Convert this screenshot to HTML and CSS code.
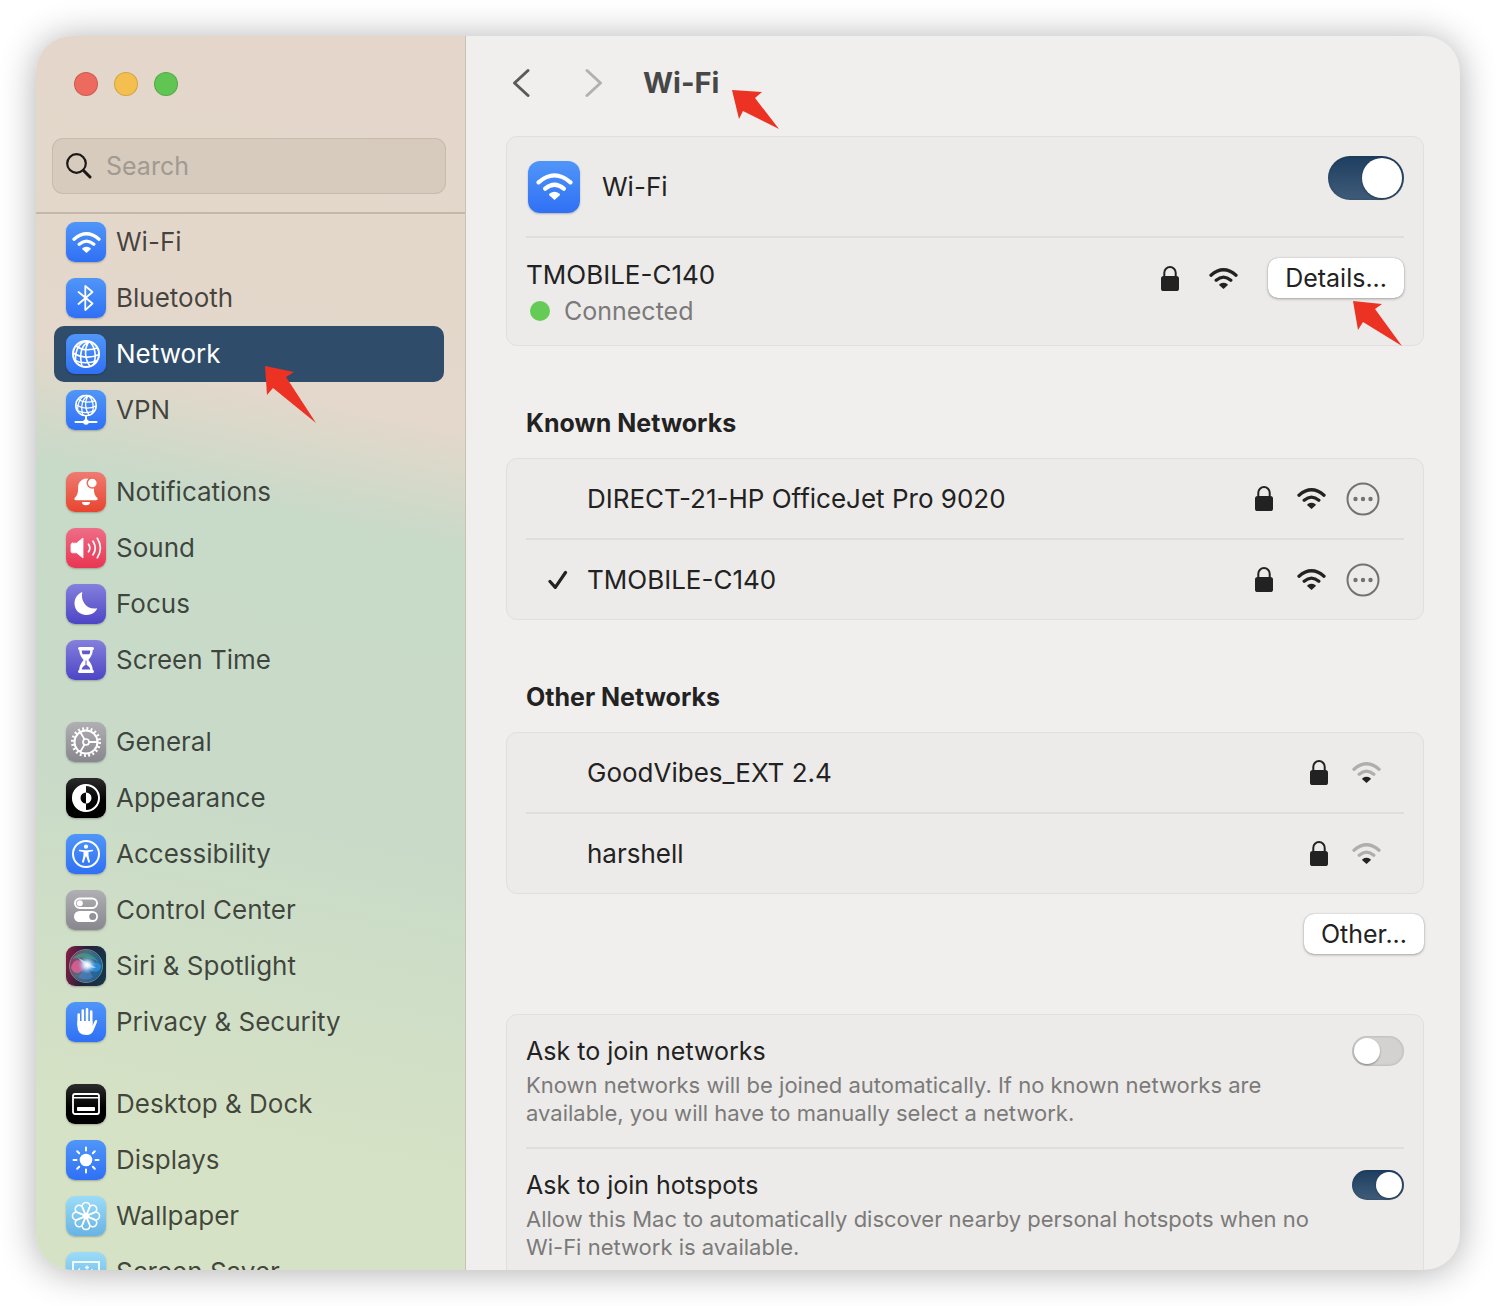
FILE: index.html
```
<!DOCTYPE html>
<html lang="en">

<head>
    <meta charset="UTF-8">
    <meta name="viewport" content="width=device-width, initial-scale=1.0">
    <title>System Settings - Wi-Fi</title>
    <link rel="stylesheet" href="styles.css">
</head>

<body>
    <!-- shared icons -->
    <svg class="defs" aria-hidden="true">
        <symbol id="wifi" viewBox="0 0 29 21">
            <path d="M2 7.2Q14.5-3.7 27 7.2M7.2 12.2Q14.5 6 21.8 12.2" fill="none" stroke="currentColor" stroke-width="3.3" stroke-linecap="round" />
            <path d="M14.5 21L10.6 17.6Q9.6 16.6 10.7 15.9Q14.5 13.5 18.3 15.9Q19.4 16.6 18.4 17.6Z" fill="currentColor" />
        </symbol>
        <symbol id="wifi-weak" viewBox="0 0 29 21">
            <path d="M2 7.2Q14.5-3.7 27 7.2M7.2 12.2Q14.5 6 21.8 12.2" fill="none" stroke="#afaead" stroke-width="3.3" stroke-linecap="round" />
            <path d="M14.5 21L10.6 17.6Q9.6 16.6 10.7 15.9Q14.5 13.5 18.3 15.9Q19.4 16.6 18.4 17.6Z" fill="currentColor" />
        </symbol>
        <symbol id="lock" viewBox="0 0 18 25">
            <path d="M3.3 11V6.8a5.7 5.7 0 0 1 11.4 0V11" fill="none" stroke="currentColor" stroke-width="2" />
            <rect y="10" width="18" height="15" rx="2.6" fill="currentColor" />
        </symbol>
        <symbol id="more" viewBox="0 0 34 34">
            <circle cx="17" cy="17" r="15.5" fill="none" stroke="currentColor" stroke-width="2" />
            <circle cx="9.5" cy="17" r="2.2" fill="currentColor" />
            <circle cx="17" cy="17" r="2.2" fill="currentColor" />
            <circle cx="24.5" cy="17" r="2.2" fill="currentColor" />
        </symbol>
        <symbol id="globe" viewBox="0 0 28 28">
            <g fill="none" stroke="currentColor" stroke-width="1.6">
                <circle cx="14" cy="14" r="13" stroke-width="2" />
                <path d="M17 1.4C9 5 7 15 10 26.4M17 1.4C12 8 12.5 19 18 26.2M17 1.4C23 6 25 16 21.5 24.5M15.5 1.2C8 1.5 3 9 3.5 21" />
                <path d="M4 6C10 10.5 18 10.5 25.5 8M1.2 13C9 18 19 18.5 27 14.5M3 20.5C9 23.5 18 23.5 25 20.5" />
            </g>
        </symbol>
    </svg>

    <div class="window">
        <aside class="sidebar">
            <div class="lights">
                <button class="light red" aria-label="Close"></button>
                <button class="light yellow" aria-label="Minimize"></button>
                <button class="light green" aria-label="Zoom"></button>
            </div>

            <label class="search">
                <svg width="26" height="26" viewBox="0 0 26 26" fill="none" stroke="#1c1815" stroke-linecap="round">
                    <circle cx="10.5" cy="10.5" r="9.3" stroke-width="2.2" />
                    <path d="M17.5 17.5L24 24" stroke-width="3" />
                </svg>
                <input type="search" placeholder="Search" aria-label="Search">
            </label>

            <nav class="menu">
                <div class="group">
                    <a href="#">
                        <span class="icon blue"><svg width="29" height="21"><use href="#wifi" /></svg></span>
                        Wi-Fi
                    </a>
                    <a href="#">
                        <span class="icon blue">
                            <svg viewBox="0 0 40 40" fill="none" stroke="#fff" stroke-width="1.8" stroke-linejoin="round" stroke-linecap="round"><path d="M12.5 14L26.5 25.5L19.3 32V8L26.5 14L12.5 26" /></svg>
                        </span>
                        Bluetooth
                    </a>
                    <a href="#" class="active">
                        <span class="icon blue"><svg width="28" height="28"><use href="#globe" /></svg></span>
                        Network
                        <svg class="arrow arrow-network" viewBox="0 0 51 57"><path d="M0 0L29 6L21 11L51 57L8 22L2 29Z" /></svg>
                    </a>
                    <a href="#">
                        <span class="icon blue">
                            <svg viewBox="0 0 40 40"><use href="#globe" x="9" y="4.5" width="22" height="22" /><path d="M20 26v6M9.5 32h21" stroke="#fff" stroke-width="2" stroke-linecap="round" /><circle cx="20" cy="32" r="2.8" fill="#fff" /></svg>
                        </span>
                        VPN
                    </a>
                </div>

                <div class="group">
                    <a href="#">
                        <span class="icon red-icon">
                            <svg viewBox="0 0 40 40" fill="#fff"><path d="M20 6.500C24 6.500 27.500 9.500 27.800 14C28 20 28 22.500 31 25.500C32.300 27 31.500 28.300 30 28.300H10C8.500 28.300 7.700 27 9 25.500C12 22.500 12 20 12.200 14C12.500 11 15 8 17.500 7.300Q18.500 6.500 20 6.500Z" /><circle cx="26.300" cy="11" r="5.800" fill="#ec6a5f" /><circle cx="26.300" cy="11" r="4.300" /><path d="M16 30h8a4 3.200 0 0 1-8 0Z" /></svg>
                        </span>
                        Notifications
                    </a>
                    <a href="#">
                        <span class="icon pink">
                            <svg viewBox="0 0 40 40" fill="none" stroke="#fff" stroke-linecap="round" stroke-width="1.7"><path d="M6.500 15.200H10.500L17 10V30L10.500 24.800H6.500Q5 24.800 5 23.300V16.700Q5 15.200 6.500 15.200Z" fill="#fff" stroke-width=".8" stroke-linejoin="round" /><path d="M22.500 16.200Q25.200 20 22.500 23.800M27 13.200Q31.500 20 27 26.800M31.300 10.300Q37.500 20 31.300 29.700" /></svg>
                        </span>
                        Sound
                    </a>
                    <a href="#">
                        <span class="icon purple">
                            <svg viewBox="0 0 40 40"><path d="M16.200 8.400C14.500 16.500 20 26 31.300 24.300C29 29 25.500 31 20.500 31C13.500 31 8.500 26 8.500 19.500C8.500 14.500 11.200 10.500 15.500 8.300Q16.400 7.800 16.200 8.400Z" fill="#fff" /></svg>
                        </span>
                        Focus
                    </a>
                    <a href="#">
                        <span class="icon purple">
                            <svg viewBox="0 0 40 40"><path d="M13.500 7H26.500Q28 7 28 8.500Q28 9.800 26.800 10C26.500 15 24 18 22.300 20C24 22 26.500 25 26.800 30Q28 30.200 28 31.500Q28 33 26.500 33H13.500Q12 33 12 31.500Q12 30.200 13.200 30C13.500 25 16 22 17.700 20C16 18 13.500 15 13.200 10Q12 9.800 12 8.500Q12 7 13.500 7Z" fill="#fff" /><path d="M15.700 10.500H24.300Q24.200 12.700 23.300 14.200H16.700Q15.800 12.700 15.700 10.500ZM19.500 20.500h1V25C22.500 26 24 27.500 24.300 29.500H15.700C16 27.500 17.500 26 19.500 25Z" fill="#5f57cc" /></svg>
                        </span>
                        Screen Time
                    </a>
                </div>

                <div class="group">
                    <a href="#">
                        <span class="icon gray">
                            <svg viewBox="0 0 40 40" fill="none" stroke="#fff"><circle cx="20" cy="20" r="11.5" stroke-width="2" /><circle cx="20" cy="20" r="13.6" stroke-width="2.8" stroke-dasharray="1.9 2.373" /><circle cx="20" cy="20" r="3" stroke-width="1.7" /><path d="M23 20H31.500M18.500 17.400L14.200 10M18.500 22.600L14.200 30" stroke-width="1.8" /></svg>
                        </span>
                        General
                    </a>
                    <a href="#">
                        <span class="icon black">
                            <svg viewBox="0 0 40 40"><circle cx="20" cy="20" r="13" fill="none" stroke="#fff" stroke-width="2" /><path d="M20 6.500V14.500A5.500 5.500 0 0 0 20 25.500V33.500A13.500 13.500 0 0 1 20 6.500ZM20 14.500A5.500 5.500 0 0 1 20 25.500Z" fill="#fff" /></svg>
                        </span>
                        Appearance
                    </a>
                    <a href="#">
                        <span class="icon blue">
                            <svg viewBox="0 0 40 40" fill="#fff"><circle cx="20" cy="20" r="13" fill="none" stroke="#fff" stroke-width="2" /><circle cx="20" cy="12.7" r="2.1" /><path d="M13.300 15.700L18.500 16.300H21.500L26.700 15.700Q27.700 16.500 26.700 17.200L22.500 18V21.500L24 28Q23 29.300 22.200 28.200L20.300 22.500H19.700L17.800 28.200Q17 29.300 16 28L17.500 21.500V18L13.300 17.200Q12.300 16.500 13.300 15.700Z" /></svg>
                        </span>
                        Accessibility
                    </a>
                    <a href="#">
                        <span class="icon gray">
                            <svg viewBox="0 0 40 40"><rect x="9" y="8.5" width="22" height="9.5" rx="4.75" fill="none" stroke="#fff" stroke-width="2" /><circle cx="13.8" cy="13.2" r="3" fill="#fff" /><rect x="8" y="21" width="24" height="11" rx="5.5" fill="#fff" /><circle cx="26.7" cy="26.5" r="3.5" fill="#929197" /></svg>
                        </span>
                        Control Center
                    </a>
                    <a href="#">
                        <span class="icon siri">
                            <svg viewBox="0 0 40 40">
                                <defs>
                                    <radialGradient id="glow"><stop offset="0" stop-color="#fff" /><stop offset=".35" stop-color="#dff0ff" stop-opacity=".85" /><stop offset="1" stop-color="#7fb6ff" stop-opacity="0" /></radialGradient>
                                    <linearGradient id="orb" x2="1" y2=".4"><stop offset="0" stop-color="#c02c63" /><stop offset=".45" stop-color="#5a8590" /><stop offset="1" stop-color="#2474b8" /></linearGradient>
                                </defs>
                                <circle cx="20" cy="20" r="16" fill="url(#orb)" opacity=".75" />
                                <circle cx="20" cy="20" r="16.5" fill="none" stroke="#8dcbb5" opacity=".6" />
                                <path d="M6 13C14 3 29 7 33 18C28 10 15 11 6 13Z" fill="#39b18b" opacity=".6" />
                                <path d="M5 22C8 10 17 14 21 20C15 29 8 29 5 22Z" fill="#f0609b" opacity=".75" />
                                <path d="M20 20C28 14 35 17 35 21C32 29 25 26 20 20Z" fill="#2d91dc" opacity=".85" />
                                <path d="M20 20L27 31Q20 36 12 31Z" fill="#4f7fc0" opacity=".7" />
                                <path d="M12 12L22 17L30 22L21 21Z" fill="#fff" opacity=".7" />
                                <circle cx="21" cy="19" r="9" fill="url(#glow)" />
                            </svg>
                        </span>
                        Siri &amp; Spotlight
                    </a>
                    <a href="#">
                        <span class="icon blue">
                            <svg viewBox="0 0 40 40" fill="none" stroke="#fff" stroke-width="2.6" stroke-linecap="round"><path d="M12.700 12.500V23M16.800 8.500V22M21 7.300V22M25.200 9.500V22" /><path d="M11.400 19H26.500V24L28.500 19.500Q29.500 17.500 31 18.300Q31.500 18.600 31 20L27.500 28.500Q25.500 33 20.500 33Q11.400 33 11.400 24Z" fill="#fff" stroke="none" /></svg>
                        </span>
                        Privacy &amp; Security
                    </a>
                </div>

                <div class="group">
                    <a href="#">
                        <span class="icon black">
                            <svg viewBox="0 0 40 40"><rect x="7" y="10" width="26" height="20" rx="2" fill="none" stroke="#fff" stroke-width="1.8" /><path d="M7 13.800H33" stroke="#fff" stroke-width="1.5" /><rect x="11" y="23" width="18" height="4" rx=".8" fill="#fff" /></svg>
                        </span>
                        Desktop &amp; Dock
                    </a>
                    <a href="#">
                        <span class="icon blue">
                            <svg viewBox="0 0 40 40" stroke="#fff" stroke-width="2" stroke-linecap="round"><circle cx="20" cy="20" r="6.3" fill="#fff" stroke="none" /><path d="M20 7.500v3M20 29.500v3M7.500 20h3M29.500 20h3M11.200 11.200l2 2M26.800 26.800l2 2M28.800 11.200l-2 2M13.200 26.800l-2 2" /></svg>
                        </span>
                        Displays
                    </a>
                    <a href="#">
                        <span class="icon sky">
                            <svg viewBox="0 0 40 40" fill="none" stroke="#fff" stroke-width="1.5">
                                <g id="petals"><path d="M20 20L16.500 12A3.900 3.900 0 1 1 23.500 12ZM20 20L16.500 28A3.900 3.900 0 1 0 23.500 28ZM20 20L12 16.500A3.900 3.900 0 1 0 12 23.500ZM20 20L28 16.500A3.900 3.900 0 1 1 28 23.500Z" /></g>
                                <use href="#petals" transform="rotate(45 20 20)" />
                                <circle cx="20" cy="20" r="2.5" />
                            </svg>
                        </span>
                        Wallpaper
                    </a>
                    <a href="#">
                        <span class="icon sky">
                            <svg viewBox="0 0 40 40" fill="none" stroke="#fff" stroke-width="1.7"><rect x="7" y="10" width="26" height="20" /><path d="M21 13.500v4M19 15.500h4M14 16.500q-2 1-1.500 3M26 17v2" stroke-width="1.3" /></svg>
                        </span>
                        Screen Saver
                    </a>
                </div>
            </nav>
        </aside>

        <main class="content">
            <header class="topbar">
                <button class="nav-btn" aria-label="Back">
                    <svg width="18" height="30" viewBox="0 0 18 30"><path d="M16 2.500L2.500 15L16 27.500" /></svg>
                </button>
                <button class="nav-btn forward" aria-label="Forward">
                    <svg width="18" height="30" viewBox="0 0 18 30"><path d="M2 2.500L15.500 15L2 27.500" /></svg>
                </button>
                <h1>
                    Wi-Fi
                    <svg class="arrow arrow-title" viewBox="0 0 47 39"><path d="M0 0L30 2L23 8L47 39L11 21L7 29Z" /></svg>
                </h1>
            </header>

            <section class="card">
                <div class="row power">
                    <span class="icon blue large"><svg width="37" height="27"><use href="#wifi" /></svg></span>
                    <label class="name" for="wifi-power">Wi-Fi</label>
                    <input type="checkbox" class="toggle big" id="wifi-power" checked>
                </div>
                <div class="row current">
                    <div class="name">
                        TMOBILE-C140
                        <div class="status"><span class="dot"></span>Connected</div>
                    </div>
                    <div class="signal">
                        <svg width="18" height="25"><use href="#lock" /></svg>
                        <svg width="29" height="21"><use href="#wifi" /></svg>
                        <button class="btn">
                            Details...
                            <svg class="arrow arrow-details" viewBox="0 0 49 45"><path d="M0 0L29 3L22 8L49 45L10 21L5 29Z" /></svg>
                        </button>
                    </div>
                </div>
            </section>

            <h2>Known Networks</h2>
            <section class="card">
                <div class="row network">
                    <span class="check"></span>
                    <span class="name">DIRECT-21-HP OfficeJet Pro 9020</span>
                    <svg width="18" height="25"><use href="#lock" /></svg>
                    <svg width="29" height="21"><use href="#wifi" /></svg>
                    <button class="more" aria-label="More options"><svg width="34" height="34"><use href="#more" /></svg></button>
                </div>
                <div class="row network">
                    <span class="check"><svg width="20" height="20" viewBox="0 0 20 20"><path d="M2 11.500L7.300 17.300L17.500 2.500" fill="none" stroke="#232222" stroke-width="3.2" stroke-linecap="round" stroke-linejoin="round" /></svg></span>
                    <span class="name">TMOBILE-C140</span>
                    <svg width="18" height="25"><use href="#lock" /></svg>
                    <svg width="29" height="21"><use href="#wifi" /></svg>
                    <button class="more" aria-label="More options"><svg width="34" height="34"><use href="#more" /></svg></button>
                </div>
            </section>

            <h2>Other Networks</h2>
            <section class="card">
                <div class="row network">
                    <span class="check"></span>
                    <span class="name">GoodVibes_EXT 2.4</span>
                    <svg width="18" height="25"><use href="#lock" /></svg>
                    <svg width="29" height="21"><use href="#wifi-weak" /></svg>
                </div>
                <div class="row network">
                    <span class="check"></span>
                    <span class="name">harshell</span>
                    <svg width="18" height="25"><use href="#lock" /></svg>
                    <svg width="29" height="21"><use href="#wifi-weak" /></svg>
                </div>
            </section>

            <div class="actions">
                <button class="btn">Other...</button>
            </div>

            <section class="card">
                <div class="row option">
                    <div class="text">
                        <label for="join-networks">Ask to join networks</label>
                        <p>Known networks will be joined automatically. If no known networks are available, you will have to manually select a network.</p>
                    </div>
                    <input type="checkbox" class="toggle" id="join-networks">
                </div>
                <div class="row option">
                    <div class="text">
                        <label for="join-hotspots">Ask to join hotspots</label>
                        <p>Allow this Mac to automatically discover nearby personal hotspots when no Wi-Fi network is available.</p>
                    </div>
                    <input type="checkbox" class="toggle" id="join-hotspots" checked>
                </div>
            </section>
        </main>
    </div>
</body>

</html>
```
FILE: styles.css
```
* {
    box-sizing: border-box;
}

body {
    margin: 0;
    padding: 36px;
    height: 100vh;
    background: #ffffff;
    color: #232222;
    font-family: Inter, "Liberation Sans", sans-serif;
    font-size: 25px;
    line-height: 32px;
}

button,
input {
    font: inherit;
    color: inherit;
}

button {
    padding: 0;
    border: 0;
    background: none;
}

svg {
    display: block;
    flex-shrink: 0;
}

.defs {
    position: absolute;
    width: 0;
    height: 0;
}

.window {
    display: flex;
    height: 100%;
    border-radius: 36px;
    overflow: hidden;
    background: #f0efed;
    box-shadow: 0 2px 36px rgba(0, 0, 0, 0.32);
}

/* sidebar */

.sidebar {
    flex: 0 0 430px;
    display: flex;
    flex-direction: column;
    overflow: hidden;
    border-right: 1px solid #c9c1b6;
    background: linear-gradient(192deg, #e4d6ca 0%, #e3d8cb 30%, #c8dac8 39%, #c9dbc8 62%, #d6e2c5 88%);
}

.lights {
    display: flex;
    gap: 16px;
    padding: 36px 38px 42px;
}

.light {
    width: 24px;
    height: 24px;
    border-radius: 50%;
    border: 1px solid rgba(0, 0, 0, 0.14);
}

.red {
    background: #ed6a5e;
}

.yellow {
    background: #f5bf4f;
}

.green {
    background: #61c554;
}

.search {
    display: flex;
    align-items: center;
    gap: 14px;
    flex-shrink: 0;
    height: 56px;
    margin: 0 19px 18px 16px;
    padding: 0 13px;
    border: 1px solid rgba(0, 0, 0, 0.08);
    border-radius: 11px;
    background: rgba(70, 60, 40, 0.08);
}

.search input {
    width: 100%;
    padding: 0;
    border: 0;
    outline: 0;
    background: none;
}

.search input::placeholder {
    color: #a19a90;
}

.menu {
    display: flex;
    flex-direction: column;
    gap: 26px;
    padding: 0 21px 0 18px;
    border-top: 2px solid rgba(70, 60, 40, 0.2);
    font-size: 26px;
}

.menu a {
    position: relative;
    display: flex;
    align-items: center;
    gap: 10px;
    height: 56px;
    padding: 0 12px;
    border-radius: 10px;
    color: rgba(0, 0, 0, 0.7);
    text-decoration: none;
}

.menu a.active {
    background: #2f4d6a;
    color: #ffffff;
}

.icon {
    display: flex;
    align-items: center;
    justify-content: center;
    flex-shrink: 0;
    width: 40px;
    height: 40px;
    border-radius: 9px;
    color: #ffffff;
    box-shadow: 0 1px 2px rgba(0, 0, 0, 0.25);
}

.large {
    width: 52px;
    height: 52px;
    border-radius: 12px;
}

.blue {
    background: linear-gradient(#5096f8, #2f70f5);
}

.red-icon {
    background: linear-gradient(#ee7c72, #e8452f);
}

.pink {
    background: linear-gradient(#ee6e88, #e93552);
}

.purple {
    background: linear-gradient(#8480dc, #4d45c5);
}

.gray {
    background: linear-gradient(#b0afb4, #88878d);
}

.black {
    background: linear-gradient(#2b2b2b, #000000 60%);
}

.sky {
    background: linear-gradient(#9bdcf8, #68b3e4);
}

.siri {
    background: linear-gradient(100deg, #8c1c45, #27203c 45%, #12394c);
    overflow: hidden;
}

/* red pointers lying over the window */

.arrow {
    position: absolute;
    fill: #ec3323;
    z-index: 1;
}

.arrow-network {
    left: 211px;
    top: 40px;
    width: 51px;
}

.arrow-title {
    left: 89px;
    top: 23px;
    width: 47px;
}

.arrow-details {
    right: 2px;
    top: 43px;
    width: 49px;
}

/* content */

.content {
    flex: 1;
    min-width: 0;
    overflow: hidden;
    padding: 0 36px 0 40px;
}

.topbar {
    display: flex;
    align-items: center;
    height: 100px;
    padding: 0 6px 6px;
}

.nav-btn {
    margin-right: 55px;
}

.nav-btn path {
    fill: none;
    stroke: #5b5a59;
    stroke-width: 3;
    stroke-linecap: round;
    stroke-linejoin: round;
}

.forward {
    margin-right: 40px;
}

.forward path {
    stroke: #b2b1b0;
}

h1 {
    position: relative;
    margin: 0;
    color: #484747;
    font-size: 29px;
    font-weight: 700;
}

h2 {
    margin: 61px 20px 19px;
    font-size: 25px;
    font-weight: 700;
}

.card {
    padding: 0 19px;
    border: 1px solid #e0dfde;
    border-radius: 11px;
    background: #ecebe9;
}

.row {
    display: flex;
    align-items: center;
}

.row + .row {
    border-top: 2px solid #dfdedd;
}

.name {
    flex: 1;
    font-size: 26px;
}

.power {
    height: 99px;
    padding-left: 2px;
    gap: 22px;
}

.power .toggle {
    align-self: flex-start;
    margin-top: 19px;
}

.current {
    align-items: flex-start;
    padding: 20px 0 17px;
}

.current .name {
    line-height: 34px;
}

.status {
    display: flex;
    align-items: center;
    gap: 14px;
    margin-top: 2px;
    padding-left: 4px;
    color: #7b7a79;
    font-size: 25px;
}

.dot {
    width: 20px;
    height: 20px;
    border-radius: 50%;
    background: #65cb57;
}

.signal {
    display: flex;
    align-items: center;
    gap: 30px;
}

.btn {
    position: relative;
    height: 40px;
    padding: 0 17px;
    border-radius: 10px;
    background: #ffffff;
    box-shadow: 0 0 1px rgba(0, 0, 0, 0.3), 0 1px 3px rgba(0, 0, 0, 0.3);
}

.network {
    height: 79px;
    gap: 24px;
    padding-right: 23px;
}

.row.network + .network {
    height: 81px;
}

.network .name {
    margin-left: -24px;
}

.check {
    width: 61px;
    padding-left: 22px;
}

.more {
    color: #737271;
    margin: 0 1px 0 -4px;
}

.actions {
    display: flex;
    justify-content: flex-end;
    margin: 20px 0 60px;
}

.option {
    align-items: flex-start;
    gap: 30px;
    padding: 20px 0;
}

.text {
    flex: 1;
}

.option p {
    margin: 4px 0 0;
    color: #7b7a79;
    font-size: 22px;
    line-height: 28px;
}

/* switches */

.toggle {
    appearance: none;
    flex-shrink: 0;
    width: 52px;
    height: 30px;
    margin: 1px 0 0;
    padding: 2px;
    border-radius: 22px;
    background: #d3d2d1;
    box-shadow: inset 0 0 3px rgba(0, 0, 0, 0.2);
}

.toggle::before {
    content: "";
    display: block;
    width: 26px;
    height: 26px;
    border-radius: 50%;
    background: #ffffff;
    box-shadow: 0 1px 2px rgba(0, 0, 0, 0.35);
}

.toggle:checked {
    background: linear-gradient(#1e3e60, #3f5c79);
}

.toggle:checked::before {
    margin-left: auto;
}

.big {
    width: 76px;
    height: 44px;
}

.big::before {
    width: 40px;
    height: 40px;
}
```
